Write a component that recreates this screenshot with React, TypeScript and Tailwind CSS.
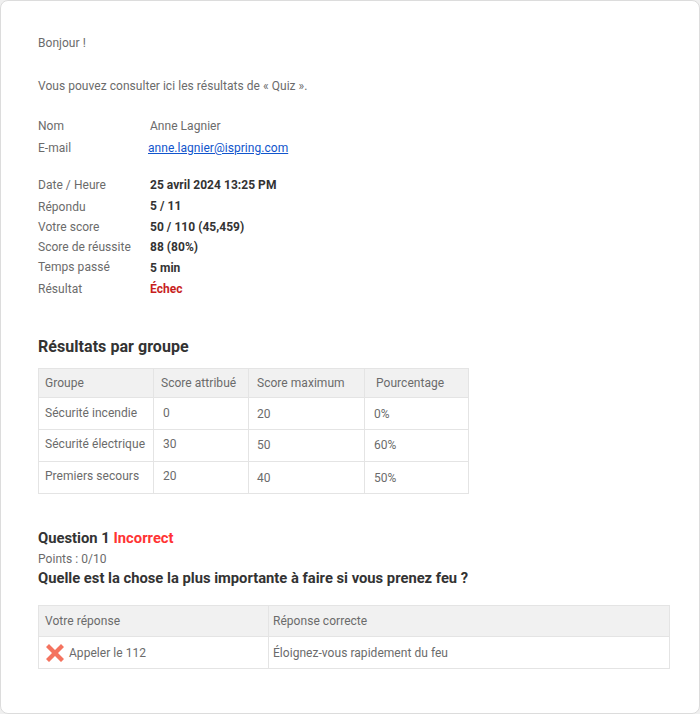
const groups = [
  { name: "Sécurité incendie", awarded: "0", max: "20", pct: "0%", lift: "pb-[2px]", liftMax: "pb-0" },
  { name: "Sécurité électrique", awarded: "30", max: "50", pct: "60%", lift: "pb-[3px]", liftMax: "pb-[2px]" },
  { name: "Premiers secours", awarded: "20", max: "40", pct: "50%", lift: "pb-[4px]", liftMax: "pb-0" },
];

function Row({ label, h, labelClass = "", children }: { label: string; h: string; labelClass?: string; children: React.ReactNode }) {
  return (
    <div className={`flex items-center ${h}`}>
      <div className={`w-[112px] font-normal text-[#6b6b6b] ${labelClass}`}>{label}</div>
      <div>{children}</div>
    </div>
  );
}

const cell = "border border-[#e4e4e4] font-normal text-left";

export default function App() {
  return (
    <div className="w-[700px] h-[714px] bg-[#f0f0f0] font-['Roboto',sans-serif] text-[12px] tracking-[0.04px] text-[#6b6b6b]">
      <div className="h-full bg-white border border-[#dcdcdc] rounded-[8px] pl-[37px] pr-[28px] pt-[34px]">
        <p className="h-[16px] leading-[16px]">Bonjour !</p>
        <p className="mt-[27px] h-[16px] leading-[16px]">Vous pouvez consulter ici les résultats de « Quiz ».</p>

        <div className="mt-[21px]">
          <Row label="Nom" h="h-[22px]">Anne Lagnier</Row>
          <Row label="E-mail" h="h-[22px]">
            <a href="#" className="-ml-[2px] block text-[#1155cc] underline">anne.lagnier@ispring.com</a>
          </Row>
        </div>

        <div className="mt-[15px] font-bold text-[#333]">
          <Row label="Date / Heure" h="h-[21px]">25 avril 2024 13:25 PM</Row>
          <Row label="Répondu" h="h-[21px]" labelClass="pt-[2px]">5 / 11</Row>
          <Row label="Votre score" h="h-[21px]">50 / 110 (45,459)</Row>
          <Row label="Score de réussite" h="h-[20px]">88 (80%)</Row>
          <Row label="Temps passé" h="h-[21px]" labelClass="pb-[2px]">5 min</Row>
          <Row label="Résultat" h="h-[21px]"><span className="text-[#c81e1e]">Échec</span></Row>
        </div>

        <h2 className="mt-[38px] text-[16px] tracking-[0.05px] leading-[20px] font-bold text-[#333]">Résultats par groupe</h2>
        <table className="mt-[11px] w-[431px] table-fixed border-collapse">
          <thead>
            <tr className="h-[29px] bg-[#f1f1f1]">
              <th className={`${cell} w-[115px] pl-[6px]`}>Groupe</th>
              <th className={`${cell} w-[95px] pl-[7px]`}>Score attribué</th>
              <th className={`${cell} w-[116px] pl-[8px]`}>Score maximum</th>
              <th className={`${cell} pl-[11px]`}>Pourcentage</th>
            </tr>
          </thead>
          <tbody>
            {groups.map((g) => (
              <tr key={g.name} className="h-[32px]">
                <td className={`${cell} pl-[6px] ${g.lift}`}>{g.name}</td>
                <td className={`${cell} pl-[9px] ${g.lift}`}>{g.awarded}</td>
                <td className={`${cell} pl-[8px] ${g.liftMax}`}>{g.max}</td>
                <td className={`${cell} pl-[9px] ${g.liftMax}`}>{g.pct}</td>
              </tr>
            ))}
          </tbody>
        </table>

        <h2 className="mt-[34px] text-[14.8px] tracking-normal leading-[20px] font-bold text-[#333]">
          Question 1 <span className="text-[#ff3333]">Incorrect</span>
        </h2>
        <p className="mt-[3px] leading-[16px]">Points : 0/10</p>
        <h3 className="mt-[1px] text-[14.75px] tracking-normal leading-[20px] font-bold text-[#333]">
          Quelle est la chose la plus importante à faire si vous prenez feu ?
        </h3>

        <table className="mt-[17px] w-[632px] table-fixed border-collapse">
          <thead>
            <tr className="h-[31px] bg-[#f1f1f1]">
              <th className={`${cell} w-[230px] pl-[6px]`}>Votre réponse</th>
              <th className={`${cell} pl-[4px]`}>Réponse correcte</th>
            </tr>
          </thead>
          <tbody>
            <tr className="h-[32px]">
              <td className={`${cell} pl-[7px]`}>
                <span className="flex items-center gap-[5px]">
                  <svg viewBox="0 0 18 18" className="w-[18px] h-[18px]">
                    <path d="M0 3 3 0 9 6 15 0 18 3 12 9 18 15 15 18 9 12 3 18 0 15 6 9Z" fill="#f4735f" />
                  </svg>
                  Appeler le 112
                </span>
              </td>
              <td className={`${cell} pl-[4px]`}>Éloignez-vous rapidement du feu</td>
            </tr>
          </tbody>
        </table>
      </div>
    </div>
  );
}
